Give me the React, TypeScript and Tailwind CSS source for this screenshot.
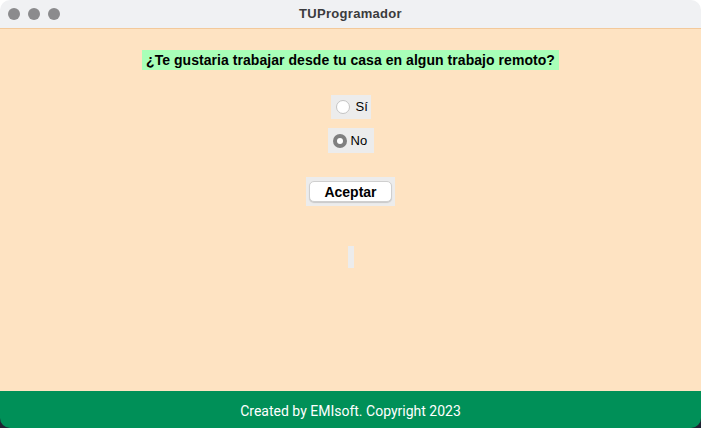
import React, { useState } from "react";

const App: React.FC = () => {
  const [choice, setChoice] = useState<"si" | "no">("no");

  return (
    <div className="w-[701px] h-[428px] flex flex-col bg-white overflow-hidden font-['Liberation_Sans',Arial,sans-serif]">
      {/* Title bar */}
      <div className="relative h-[29px] shrink-0 bg-[#f0f1f3] rounded-t-[10px] border-b border-[#f3c99a] flex items-center justify-center">
        <div className="absolute left-[8px] top-[8px] flex gap-[8px]">
          <span className="w-[12px] h-[12px] rounded-full bg-[#8b8b8d]" />
          <span className="w-[12px] h-[12px] rounded-full bg-[#8b8b8d]" />
          <span className="w-[12px] h-[12px] rounded-full bg-[#8b8b8d]" />
        </div>
        <span className="text-[13px] font-bold text-[#3b3b3d] tracking-[0.3px] mt-[-1px]">TUProgramador</span>
      </div>

      {/* Content */}
      <div className="flex-1 bg-[#fee3c2] flex flex-col items-center">
        <div className="mt-[21px] bg-[#a8ffb8] h-[20px] px-[4px] flex items-center">
          <span className="text-[14px] font-bold text-black tracking-[0.05px]">
            ¿Te gustaria trabajar desde tu casa en algun trabajo remoto?
          </span>
        </div>

        {/* Radio Sí */}
        <button
          onClick={() => setChoice("si")}
          className="mt-[25px] h-[24px] w-[40px] bg-[#ececec] flex items-center pl-[5px] gap-[6px]"
        >
          <Radio checked={choice === "si"} />
          <span className="text-[13px] text-black">Sí</span>
        </button>

        {/* Radio No */}
        <button
          onClick={() => setChoice("no")}
          className="mt-[9px] h-[25px] w-[46px] bg-[#ececec] flex items-center pl-[5px] gap-[4px]"
        >
          <Radio checked={choice === "no"} />
          <span className="text-[13px] text-black">No</span>
        </button>

        {/* Aceptar */}
        <div className="mt-[24px] w-[89px] h-[29px] bg-[#ececec] flex items-center justify-center">
          <button className="w-[83px] h-[21px] bg-white rounded-[5px] border border-[#cfcfcf] shadow-[0_1px_1px_rgba(0,0,0,0.15)] text-[14px] font-bold text-black leading-none">
            Aceptar
          </button>
        </div>

        <div className="mt-[40px] w-[6px] h-[22px] bg-[#ececec]" />
      </div>

      {/* Footer */}
      <div className="bg-[#1f2232] shrink-0">
        <div className="h-[37px] bg-[#009058] rounded-b-[10px] flex items-center justify-center">
          <span className="text-[14px] text-white font-['Roboto',sans-serif] mt-[4px]">
            Created by EMIsoft. Copyright 2023
          </span>
        </div>
      </div>
    </div>
  );
};

const Radio: React.FC<{ checked: boolean }> = ({ checked }) =>
  checked ? (
    <span className="w-[14px] h-[14px] rounded-full bg-[#7f7f7f] flex items-center justify-center">
      <span className="w-[6px] h-[6px] rounded-full bg-white" />
    </span>
  ) : (
    <span className="w-[14px] h-[14px] rounded-full bg-white border border-[#c4c4c4]" />
  );

export default App;
